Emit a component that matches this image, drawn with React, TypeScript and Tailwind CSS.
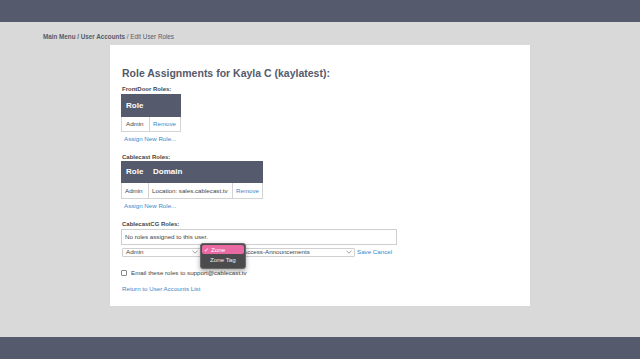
import React from "react";

const Chevron = () => (
  <svg width="6" height="4" viewBox="0 0 6 4" className="shrink-0">
    <path d="M0.5 0.8 L3 3.2 L5.5 0.8" fill="none" stroke="#8a8a8a" strokeWidth="0.8" />
  </svg>
);

export default function App() {
  return (
    <div className="w-[640px] h-[359px] bg-[#d9d9d9] flex flex-col font-['Liberation_Sans',Arial,sans-serif] overflow-hidden">
      <div className="h-[22px] bg-[#555a6c] shrink-0" />
      <div className="pt-[10px] pl-[43px] h-[19px] leading-[9px] text-[6.3px] text-[#555a6c] shrink-0">
        <span className="font-bold">Main Menu / User Accounts</span> / Edit User Roles
      </div>
      <div className="mt-[4px] ml-[110px] w-[420px] h-[261px] bg-white pl-[11px] flex flex-col shrink-0">
        <div className="pt-[21px] h-[35px] leading-[14px] text-[10.5px] text-[#555a6c] font-bold pl-[1px]">
          Role Assignments for Kayla C (kaylatest):
        </div>
        <div className="mt-[5px] h-[8px] leading-[8px] text-[6px] font-bold text-[#444] pl-[1px]">FrontDoor Roles:</div>
        <table className="mt-[1px] border-collapse text-[6.2px] w-[60px]">
          <thead>
            <tr className="bg-[#555a6c] text-white h-[22px]">
              <th className="text-left font-bold text-[8px] pl-[4px] w-[28px] border border-[#555a6c]">Role</th>
              <th className="border border-[#555a6c]"></th>
            </tr>
          </thead>
          <tbody>
            <tr className="h-[15px]">
              <td className="border border-[#d4d4d4] pl-[4px] text-[#444]">Admin</td>
              <td className="border border-[#d4d4d4] pl-[3px] text-[#3a87c8]">Remove</td>
            </tr>
          </tbody>
        </table>
        <div className="mt-[3px] h-[8px] leading-[8px] text-[6.2px] text-[#3a87c8] pl-[3px]">Assign New Role...</div>
        <div className="mt-[10px] h-[8px] leading-[8px] text-[6px] font-bold text-[#444] pl-[1px]">Cablecast Roles:</div>
        <table className="mt-0 border-collapse text-[6.2px] w-[142px]">
          <thead>
            <tr className="bg-[#555a6c] text-white h-[21px]">
              <th className="text-left font-bold text-[8px] pl-[4px] w-[27px] border border-[#555a6c]">Role</th>
              <th className="text-left font-bold text-[8px] pl-[4px] w-[84px] border border-[#555a6c]">Domain</th>
              <th className="border border-[#555a6c]"></th>
            </tr>
          </thead>
          <tbody>
            <tr className="h-[16px]">
              <td className="border border-[#d4d4d4] pl-[3px] text-[#444]">Admin</td>
              <td className="border border-[#d4d4d4] pl-[3px] text-[#444]">Location: sales.cablecast.tv</td>
              <td className="border border-[#d4d4d4] pl-[3px] text-[#3a87c8]">Remove</td>
            </tr>
          </tbody>
        </table>
        <div className="mt-[3px] h-[8px] leading-[8px] text-[6.2px] text-[#3a87c8] pl-[3px]">Assign New Role...</div>
        <div className="mt-[10px] h-[8px] leading-[8px] text-[6px] font-bold text-[#444] pl-[1px]">CablecastCG Roles:</div>
        <div className="mt-[1px] w-[276px] h-[16px] border border-[#cfcfcf] flex items-center pl-[3px] text-[6.2px] text-[#444]">
          No roles assigned to this user.
        </div>
        <div className="relative mt-[2px] h-[10px] flex items-center text-[6.2px] text-[#444]">
          <div className="ml-[1px] w-[80px] h-[9px] border border-[#d0d0d0] rounded-[1px] flex items-center justify-between px-[3px]">
            <span>Admin</span>
            <Chevron />
          </div>
          <div className="ml-[2px] w-[34px] h-[9px] border border-[#d0d0d0] rounded-[1px]" />
          <div className="ml-[1px] w-[116px] h-[9px] border border-[#d0d0d0] rounded-[1px] flex items-center justify-between pl-[3px] pr-[2px]">
            <span>Access-Announcements</span>
            <Chevron />
          </div>
          <span className="ml-[2px] text-[#3a87c8]">Save Cancel</span>
          <div className="absolute left-[79px] top-[-4px] w-[46px] h-[26px] bg-[#4b4b4d] rounded-[3px] shadow-[0_2px_5px_rgba(0,0,0,0.35)] border border-[#6a6a6a] p-[1px] flex flex-col">
            <div className="h-[9px] bg-[#e96aa2] rounded-[2px] flex items-center pl-[2px] text-white text-[6.2px]">
              <span className="w-[7px]">✓</span>Zone
            </div>
            <div className="h-[12px] flex items-center pl-[8px] text-[#eee] text-[6.2px]">Zone Tag</div>
          </div>
        </div>
        <div className="mt-[12px] h-[8px] flex items-center text-[6.2px] text-[#444]">
          <div className="w-[6px] h-[6px] border border-[#888] rounded-[1px] bg-white" />
          <span className="ml-[4px]">Email these roles to support@cablecast.tv</span>
        </div>
        <div className="mt-[8px] h-[8px] leading-[8px] text-[6.2px] text-[#3a87c8] pl-[1px]">Return to User Accounts List</div>
      </div>
      <div className="mt-auto h-[22px] bg-[#555a6c] shrink-0" />
    </div>
  );
}
